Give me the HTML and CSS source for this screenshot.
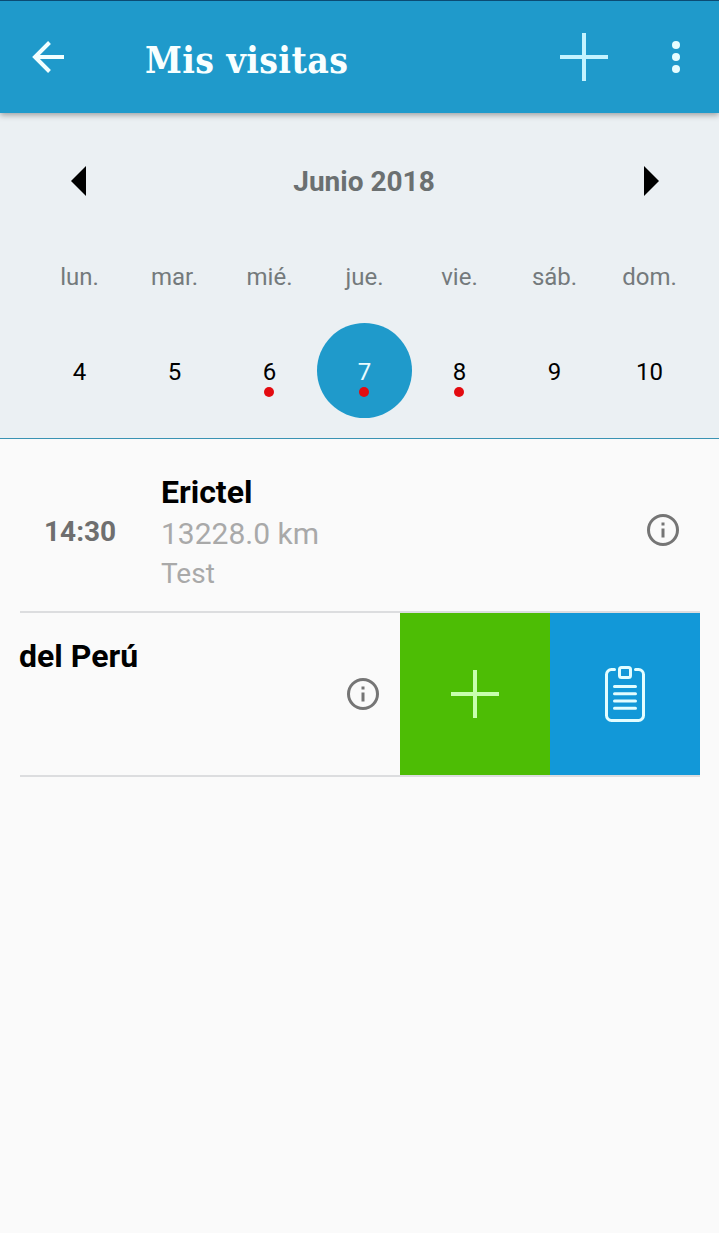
FILE: index.html
```html
<!DOCTYPE html>
<html lang="es">
<head>
  <meta charset="UTF-8" />
  <meta name="viewport" content="width=device-width, initial-scale=1" />
  <title>Mis visitas</title>
  <link rel="stylesheet" href="styles.css">
</head>
<body>

  <header class="toolbar">
    <button class="back" aria-label="Volver">
      <svg width="32" height="32" viewBox="0 0 32 32"><path d="M32 16H3M17.500 1.500L3 16l14.500 14.500" /></svg>
    </button>
    <h1>Mis visitas</h1>
    <button class="add" aria-label="Nueva visita">
      <svg width="48" height="48" viewBox="0 0 48 48"><path d="M24 0v48M0 24h48" /></svg>
    </button>
    <button class="more" aria-label="Más opciones">
      <svg width="8" height="32" viewBox="0 0 8 32"><circle cx="4" cy="4" r="4" /><circle cx="4" cy="16" r="4" /><circle cx="4" cy="28" r="4" /></svg>
    </button>
  </header>

  <section class="calendar">
    <div class="month">
      <button aria-label="Semana anterior">
        <svg width="15" height="30" viewBox="0 0 15 30"><path d="M15 0v30L0 15z" /></svg>
      </button>
      <h2>Junio 2018</h2>
      <button aria-label="Semana siguiente">
        <svg width="15" height="30" viewBox="0 0 15 30"><path d="M0 0v30l15-15z" /></svg>
      </button>
    </div>
    <div class="week names">
      <span>lun.</span>
      <span>mar.</span>
      <span>mié.</span>
      <span>jue.</span>
      <span>vie.</span>
      <span>sáb.</span>
      <span>dom.</span>
    </div>
    <div class="week days">
      <span>4</span>
      <span>5</span>
      <span class="event">6</span>
      <span class="event selected">7</span>
      <span class="event">8</span>
      <span>9</span>
      <span>10</span>
    </div>
  </section>

  <main class="visits">
    <article class="visit">
      <time>14:30</time>
      <div class="details">
        <h3>Erictel</h3>
        <p class="distance">13228.0 km</p>
        <p class="note">Test</p>
      </div>
      <svg class="info" width="32" height="32" viewBox="0 0 32 32"><circle cx="16" cy="16" r="14.500" /><path d="M16 14.500v9M16 8.500v3" /></svg>
    </article>

    <!-- swiped row -->
    <article class="visit swiped">
      <h3>del Perú</h3>
      <svg class="info" width="32" height="32" viewBox="0 0 32 32"><circle cx="16" cy="16" r="14.500" /><path d="M16 14.500v9M16 8.500v3" /></svg>
      <div class="actions">
        <button class="action-add" aria-label="Añadir">
          <svg width="48" height="48" viewBox="0 0 48 48"><path d="M24 0v48M0 24h48" /></svg>
        </button>
        <button class="action-report" aria-label="Informe">
          <svg width="40" height="56" viewBox="0 0 40 56">
            <path d="M9.500 3.500H6.500a5 5 0 0 0-5 5v41a5 5 0 0 0 5 5h27a5 5 0 0 0 5-5v-41a5 5 0 0 0-5-5h-3" />
            <rect x="14.500" y="1.500" width="11" height="10" rx="2" />
            <path d="M9.500 20.500h21M9.500 27.700h21M9.500 35h21M9.500 42.200h21" />
          </svg>
        </button>
      </div>
    </article>
  </main>

</body>
</html>
```
FILE: styles.css
```css
* {
  box-sizing: border-box;
}
body {
  margin: 0;
  min-height: 100vh;
  font-family: Roboto, sans-serif;
  background-color: #fafafa;
  color: #000;
}
h1, h2, h3, p {
  margin: 0;
}
button {
  padding: 0;
  border: none;
  background: none;
  cursor: pointer;
}
svg {
  display: block;
}

/* Toolbar */
.toolbar {
  position: relative;
  display: flex;
  align-items: center;
  height: 113px;
  padding: 0 39px 0 32px;
  border-top: 1px solid #0b4b73;
  background-color: #1f9acb;
  box-shadow: 0 2px 6px rgba(0,0,0,0.35);
}
.toolbar h1 {
  flex: 1;
  margin-left: 81px;
  padding-top: 6px;
  color: #f8ffff;
  font-family: "DejaVu Serif", serif;
  font-size: 37px;
  font-stretch: condensed;
  font-weight: bold;
  letter-spacing: 0.4px;
  line-height: 44px;
  white-space: nowrap;
}
.back svg {
  fill: none;
  stroke: #f2ffff;
  stroke-width: 4;
}
.add svg {
  stroke: #c4f3ff;
  stroke-width: 4;
}
.more {
  margin-left: 64px;
}
.more svg {
  fill: #e6fdff;
}

/* Calendar */
.calendar {
  height: 326px;
  padding: 53px 22px 0 32px;
  border-bottom: 1px solid #3a93b3;
  background-color: #ebf0f3;
}
.month {
  display: flex;
  justify-content: space-between;
  align-items: center;
  height: 30px;
  padding: 0 38px 0 39px;
}
.month h2 {
  padding: 2px 2px 0 0;
  color: #6b7071;
  font-size: 28px;
  line-height: 30px;
}
.week {
  display: grid;
  grid-template-columns: repeat(7, 95px);
  font-size: 24px;
  text-align: center;
}
.names {
  margin-top: 66px;
  color: #747a7c;
  line-height: 30px;
}
.days {
  margin-top: 31px;
  line-height: 99px;
}
.days span {
  position: relative;
  height: 95px;
}
.selected {
  border-radius: 50%;
  background-color: #1f9acb;
  color: #e9fcff;
}
.event::after {
  content: "";
  position: absolute;
  top: 64px;
  left: 42px;
  width: 10px;
  height: 10px;
  border-radius: 50%;
  background-color: #e30b10;
}

/* Visits */
.visits {
  padding: 0 19px 0 20px;
}
.visit {
  display: flex;
  align-items: center;
  height: 174px;
  padding: 10px 21px 0 24px;
  border-bottom: 2px solid #dcdddf;
}
.visit time {
  width: 117px;
  padding-top: 2px;
  color: #6f6f6f;
  font-size: 28px;
  font-weight: bold;
}
.visit h3 {
  margin-bottom: 2px;
  font-size: 32px;
  line-height: 38px;
}
.details {
  flex: 1;
  padding-top: 6px;
}
.distance, .note {
  color: #a9a9a9;
}
.distance {
  font-size: 30px;
  line-height: 42px;
}
.note {
  font-size: 28px;
  line-height: 38px;
}
.info {
  fill: none;
  stroke: #757575;
  stroke-width: 3;
}
.swiped {
  height: 164px;
  padding: 0;
}
.swiped h3 {
  flex: 1;
  align-self: flex-start;
  margin-top: 24px;
  margin-left: -1px;
}
.swiped .info {
  margin-right: 21px;
}
.actions {
  display: flex;
  height: 162px;
}
.actions button {
  display: flex;
  align-items: center;
  justify-content: center;
  width: 150px;
}
.action-add {
  background-color: #4dbd05;
}
.action-add svg {
  stroke: #c8ffae;
  stroke-width: 4;
}
.action-report {
  background-color: #1298d8;
}
.action-report svg {
  fill: none;
  stroke: #e2fdff;
  stroke-width: 3;
  stroke-linecap: round;
}
```
